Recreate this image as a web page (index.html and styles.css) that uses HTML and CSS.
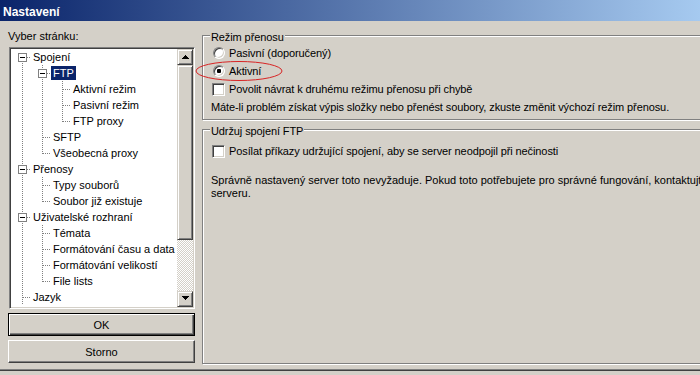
FILE: index.html
```html
<!DOCTYPE html>
<html lang="cs">
<head>
<meta charset="utf-8">
<title>Nastavení</title>
<link rel="stylesheet" href="styles.css">
</head>
<body>
<div class="window">
  <div class="titlebar">Nastavení</div>
  <div class="main">
    <div class="left">
      <div class="caption">Vyber stránku:</div>
      <div class="treebox">
        <ul class="tree">
          <li class="row"><span class="g top"><i class="box"></i></span><span class="lbl">Spojení</span></li>
          <li class="row"><span class="g v"></span><span class="g t"><i class="box"></i></span><span class="lbl sel">FTP</span></li>
          <li class="row"><span class="g v"></span><span class="g v"></span><span class="g t"></span><span class="lbl">Aktivní režim</span></li>
          <li class="row"><span class="g v"></span><span class="g v"></span><span class="g t"></span><span class="lbl">Pasivní režim</span></li>
          <li class="row"><span class="g v"></span><span class="g v"></span><span class="g l"></span><span class="lbl">FTP proxy</span></li>
          <li class="row"><span class="g v"></span><span class="g t"></span><span class="lbl">SFTP</span></li>
          <li class="row"><span class="g v"></span><span class="g l"></span><span class="lbl">Všeobecná proxy</span></li>
          <li class="row"><span class="g t"><i class="box"></i></span><span class="lbl">Přenosy</span></li>
          <li class="row"><span class="g v"></span><span class="g t"></span><span class="lbl">Typy souborů</span></li>
          <li class="row"><span class="g v"></span><span class="g l"></span><span class="lbl">Soubor již existuje</span></li>
          <li class="row"><span class="g t"><i class="box"></i></span><span class="lbl">Uživatelské rozhraní</span></li>
          <li class="row"><span class="g v"></span><span class="g t"></span><span class="lbl">Témata</span></li>
          <li class="row"><span class="g v"></span><span class="g t"></span><span class="lbl">Formátování času a data</span></li>
          <li class="row"><span class="g v"></span><span class="g t"></span><span class="lbl">Formátování velikostí</span></li>
          <li class="row"><span class="g v"></span><span class="g l"></span><span class="lbl">File lists</span></li>
          <li class="row"><span class="g t"></span><span class="lbl">Jazyk</span></li>
        </ul>
        <div class="vscroll">
          <div class="sbtn up"><svg width="7" height="4" viewBox="0 0 7 4"><path d="M3 0h1v1h1v1h1v1h1v1H0V3h1V2h1V1h1z" fill="#000"/></svg></div>
          <div class="thumb"></div>
          <div class="track"></div>
          <div class="sbtn down"><svg width="7" height="4" viewBox="0 0 7 4"><path d="M0 0h7v1H6v1H5v1H4v1H3V3H2V2H1V1H0z" fill="#000"/></svg></div>
        </div>
      </div>
      <button class="btn default">OK</button>
      <button class="btn">Storno</button>
    </div>
    <div class="right">
      <fieldset class="group g1">
        <legend>Režim přenosu</legend>
        <div class="opt"><span class="radio"></span>Pasivní (doporučený)</div>
        <div class="opt"><span class="radio on"></span>Aktivní</div>
        <div class="opt"><span class="check"></span>Povolit návrat k druhému režimu přenosu při chybě</div>
        <p class="note">Máte-li problém získat výpis složky nebo přenést soubory, zkuste změnit výchozí režim přenosu.</p>
      </fieldset>
      <fieldset class="group g2">
        <legend>Udržuj spojení FTP</legend>
        <div class="opt"><span class="check"></span>Posílat příkazy udržující spojení, aby se server neodpojil při nečinosti</div>
        <p class="para"><span class="line">Správně nastavený server toto nevyžaduje. Pokud toto potřebujete pro správné fungování, kontaktujte správce</span><br>serveru.</p>
      </fieldset>
    </div>
  </div>
  <div class="frame"></div>
  <svg class="annot" width="90" height="23" viewBox="0 0 90 23"><ellipse cx="45" cy="11" rx="43" ry="9.5" fill="none" stroke="#d82424" stroke-width="1"/></svg>
</div>
</body>
</html>
```

FILE: styles.css
```css
html, body {
  margin: 0;
  padding: 0;
}
body {
  width: 700px;
  height: 375px;
  overflow: hidden;
  background: #d4d0c8;
  font-family: "Liberation Sans", Arial, sans-serif;
  font-size: 11px;
  color: #000;
}
.window {
  position: relative;
  display: flex;
  flex-direction: column;
  height: 375px;
}
.titlebar {
  height: 21px;
  box-sizing: border-box;
  padding: 4px 3px 0;
  line-height: 17px;
  font-size: 12px;
  font-weight: bold;
  color: #fff;
  background: linear-gradient(to right, #0a246a, #a6caf0);
}
.main {
  display: flex;
  height: 348px;
  overflow: hidden;
}
.left {
  width: 196px;
  flex: none;
  box-sizing: border-box;
  padding: 9px 0 0 8px;
  display: flex;
  flex-direction: column;
}
.caption {
  height: 13px;
  line-height: 13px;
}
.treebox {
  margin: 4px 0 0 1px;
  width: 186px;
  height: 262px;
  box-sizing: border-box;
  border: 1px solid;
  border-color: #808080 #fff #fff #808080;
  box-shadow: inset 1px 1px #404040, inset -1px -1px #d4d0c8;
  padding: 1px;
  background: #fff;
  display: flex;
}
.tree {
  flex: 1;
  list-style: none;
  margin: 0;
  padding: 0;
  overflow: hidden;
}
.row {
  display: flex;
  height: 16px;
  white-space: nowrap;
}
.g {
  position: relative;
  flex: none;
  width: 20px;
  height: 16px;
}
.g::before,
.g::after {
  content: "";
  position: absolute;
}
.v::before,
.t::before,
.l::before,
.top::before {
  left: 11px;
  width: 1px;
  background: repeating-linear-gradient(to bottom, #808080 0 1px, transparent 1px 2px);
}
.v::before,
.t::before {
  top: 0;
  height: 16px;
}
.l::before {
  top: 0;
  height: 9px;
}
.top::before {
  top: 8px;
  height: 8px;
}
.t::after,
.l::after,
.top::after {
  left: 12px;
  top: 8px;
  width: 8px;
  height: 1px;
  background: repeating-linear-gradient(to right, #808080 0 1px, transparent 1px 2px);
}
.box {
  position: absolute;
  left: 7px;
  top: 4px;
  width: 9px;
  height: 9px;
  box-sizing: border-box;
  border: 1px solid #808080;
  background: #fff;
  z-index: 1;
}
.box::after {
  content: "";
  position: absolute;
  left: 1px;
  top: 3px;
  width: 5px;
  height: 1px;
  background: #000;
}
.lbl {
  height: 14px;
  line-height: 14px;
  margin-top: 1px;
  padding: 0 2px;
}
.sel {
  background: #0a246a;
  color: #fff;
}
.vscroll {
  width: 16px;
  flex: none;
  display: flex;
  flex-direction: column;
}
.sbtn,
.thumb {
  box-sizing: border-box;
  border: 1px solid;
  border-color: #d4d0c8 #404040 #404040 #d4d0c8;
  box-shadow: inset 1px 1px #fff, inset -1px -1px #808080;
  background: #d4d0c8;
}
.sbtn {
  height: 16px;
  padding: 5px 0 0 4px;
}
.sbtn.down {
  padding-top: 4px;
}
.sbtn svg {
  display: block;
}
.thumb {
  height: 175px;
}
.track {
  flex: 1;
  background: repeating-conic-gradient(#fff 0 25%, #d4d0c8 0 50%) 0 0 / 2px 2px;
}
.btn {
  font: inherit;
  color: #000;
  width: 187px;
  height: 23px;
  margin: 4px 0 0;
  padding: 0;
  box-sizing: border-box;
  background: #d4d0c8;
  border: 1px solid;
  border-color: #fff #404040 #404040 #fff;
  box-shadow: inset -1px -1px #808080;
}
.btn.default {
  border: 1px solid #000;
  box-shadow: inset 1px 1px #fff, inset -1px -1px #404040, inset -2px -2px #808080;
}
.right {
  width: 600px;
  flex: none;
  margin-left: 6px;
  box-sizing: border-box;
  padding: 6px 0 5px;
  display: flex;
  flex-direction: column;
  letter-spacing: -0.1px;
}
.group {
  margin: 0;
  padding: 0 0 3px 8px;
  min-width: 0;
  border: 1px solid #808080;
  box-shadow: 1px 1px 0 #fff, inset 1px 1px 0 #fff;
}
.group legend {
  padding: 4px 1px 0;
  margin-left: -1px;
  line-height: 13px;
  background: #d4d0c8;
}
.g2 {
  margin-top: 1px;
  flex: 1;
}
.opt {
  display: flex;
  align-items: center;
  height: 18px;
  white-space: nowrap;
}
.g2 .opt {
  margin-top: 4px;
}
.radio {
  position: relative;
  flex: none;
  width: 12px;
  height: 12px;
  box-sizing: border-box;
  margin: 0 4px 0 2px;
  border-radius: 50%;
  border: 1px solid;
  border-color: #808080 #fff #fff #808080;
  box-shadow: inset 1px 1px #404040, inset -1px -1px #d4d0c8;
  background: #fff;
}
.radio.on::after {
  content: "";
  position: absolute;
  left: 3px;
  top: 3px;
  width: 4px;
  height: 4px;
  border-radius: 1px;
  background: #000;
}
.check {
  flex: none;
  width: 13px;
  height: 13px;
  box-sizing: border-box;
  margin: 0 4px 0 1px;
  border: 1px solid;
  border-color: #808080 #fff #fff #808080;
  box-shadow: inset 1px 1px #404040, inset -1px -1px #d4d0c8;
  background: #fff;
}
.note {
  margin: 0;
  height: 18px;
  line-height: 18px;
  white-space: nowrap;
}
.para {
  margin: 14px 0 0;
  line-height: 13px;
  letter-spacing: 0;
}
.para .line {
  white-space: nowrap;
}
.frame {
  height: 6px;
  box-sizing: border-box;
  border-top: 1px solid #808080;
  box-shadow: inset 0 1px #404040;
}
.annot {
  position: absolute;
  left: 194px;
  top: 60px;
}
```
